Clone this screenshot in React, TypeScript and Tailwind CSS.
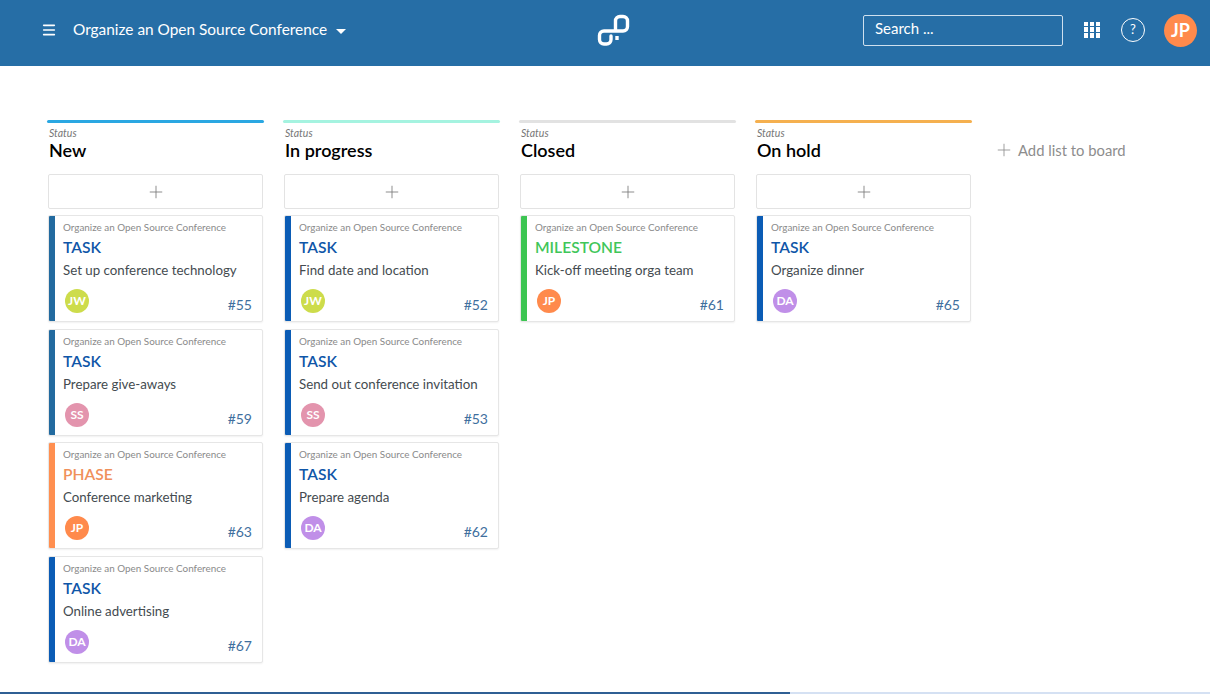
import { Menu, Plus } from 'lucide-react';

const font = "font-['Lato','Open_Sans','Liberation_Sans',sans-serif]";

type Card = {
  type: string;
  typeColor: string;
  barColor: string;
  title: string;
  initials: string;
  avatar: string;
  id: number;
};

const blueDark = 'bg-[#226a9f]';
const blue = 'bg-[#0b5cb5]';
const taskText = 'text-[#0f56a8]';

const JW = { initials: 'JW', avatar: 'bg-[#cddc4b]' };
const SS = { initials: 'SS', avatar: 'bg-[#e394ad]' };
const JP = { initials: 'JP', avatar: 'bg-[#ff8a4c]' };
const DA = { initials: 'DA', avatar: 'bg-[#c08fe8]' };

const columns: { name: string; color: string; cards: Card[] }[] = [
  {
    name: 'New',
    color: 'bg-[#2aa7e2]',
    cards: [
      { type: 'TASK', typeColor: taskText, barColor: blueDark, title: 'Set up conference technology', ...JW, id: 55 },
      { type: 'TASK', typeColor: taskText, barColor: blueDark, title: 'Prepare give-aways', ...SS, id: 59 },
      { type: 'PHASE', typeColor: 'text-[#f0905a]', barColor: 'bg-[#ff8f50]', title: 'Conference marketing', ...JP, id: 63 },
      { type: 'TASK', typeColor: taskText, barColor: blue, title: 'Online advertising', ...DA, id: 67 },
    ],
  },
  {
    name: 'In progress',
    color: 'bg-[#a5f3e0]',
    cards: [
      { type: 'TASK', typeColor: taskText, barColor: blue, title: 'Find date and location', ...JW, id: 52 },
      { type: 'TASK', typeColor: taskText, barColor: blue, title: 'Send out conference invitation', ...SS, id: 53 },
      { type: 'TASK', typeColor: taskText, barColor: blue, title: 'Prepare agenda', ...DA, id: 62 },
    ],
  },
  {
    name: 'Closed',
    color: 'bg-[#e2e2e2]',
    cards: [
      { type: 'MILESTONE', typeColor: 'text-[#40c659]', barColor: 'bg-[#3dc552]', title: 'Kick-off meeting orga team', ...JP, id: 61 },
    ],
  },
  {
    name: 'On hold',
    color: 'bg-[#f5b04f]',
    cards: [
      { type: 'TASK', typeColor: taskText, barColor: blue, title: 'Organize dinner', ...DA, id: 65 },
    ],
  },
];

function Logo() {
  return (
    <svg width="34" height="32" viewBox="0 0 34 32" fill="none" stroke="white" strokeWidth="3.4" strokeLinecap="round">
      <path d="M19.5 16V7a4.5 4.5 0 0 1 4.5-4.5h3a4.5 4.5 0 0 1 4.5 4.5v5.5a4.5 4.5 0 0 1-4.5 4.5H8a4.5 4.5 0 0 0-4.5 4.5v4a4.5 4.5 0 0 0 4.5 4.5h2.5a4.5 4.5 0 0 0 4.5-4.5V22" />
      <path d="M21 22V26" strokeLinecap="butt" />
    </svg>
  );
}

function GridIcon() {
  const cells = [0, 1, 2, 3, 4, 5, 6, 7, 8];
  return (
    <div className="grid grid-cols-3 gap-[1.5px] w-[16px] h-[16px]">
      {cells.map((c) => (
        <span key={c} className="bg-white" />
      ))}
    </div>
  );
}

function TaskCard({ card }: { card: Card }) {
  return (
    <div className="flex h-[107px] ml-[1px] w-[215px] rounded-[2px] bg-white border border-[#e6e6e6] shadow-[0_1px_2px_rgba(0,0,0,0.06)] overflow-hidden">
      <div className={`w-[6px] shrink-0 ${card.barColor}`} />
      <div className="flex-1 flex flex-col pl-[8px] pr-[3px] min-w-0">
        <div className="text-[9.9px] leading-[14px] mt-[4px] text-[#8a8a8a] whitespace-nowrap">Organize an Open Source Conference</div>
        <div className={`text-[15.6px] leading-[20px] mt-[3px] font-semibold ${card.typeColor}`}>{card.type}</div>
        <div className="text-[13.3px] leading-[18px] mt-[4px] text-[#444b50] whitespace-nowrap">{card.title}</div>
        <div className="flex justify-between mt-[10px] pl-[2px]">
          <div className={`w-6 h-6 rounded-full flex items-center justify-center text-white text-[12px] font-bold ${card.avatar}`}>
            {card.initials}
          </div>
          <div className="text-[14px] leading-[18px] mt-[7px] pr-[7px] text-[#3f6f9e]">#{card.id}</div>
        </div>
      </div>
    </div>
  );
}

export default function App() {
  return (
    <div className={`h-[694px] w-[1210px] flex flex-col bg-white overflow-hidden ${font}`}>
      {/* Header */}
      <header className="h-[66px] shrink-0 bg-[#266ea6] flex items-center relative pl-[41px] pr-[13px] pb-[6px] text-white">
        <Menu size={16} strokeWidth={2.4} />
        <span className="ml-[16px] text-[15.4px]">Organize an Open Source Conference</span>
        <span className="ml-[9px] mt-[2px] w-0 h-0 border-x-[5px] border-x-transparent border-t-[5px] border-t-white" />
        <div className="absolute left-[596px] top-[14px]">
          <Logo />
        </div>
        <div className="ml-auto w-[200px] h-[31px] border-[1.5px] border-[#cfe0ee] rounded-[2px] flex items-center pl-[11px] pb-[3px] text-[15px]">
          Search ...
        </div>
        <div className="ml-[21px] mt-[-1px]">
          <GridIcon />
        </div>
        <div className="ml-[21px] w-6 h-6 rounded-full border border-white flex items-center justify-center text-[13px]">?</div>
        <div className="ml-[19px] w-[33px] h-[33px] rounded-full bg-[#ff8a4c] flex items-center justify-center text-[18px] font-bold">JP</div>
      </header>

      {/* Board */}
      <main className="flex-1 flex gap-[18px] pl-[47px] pt-[54px]">
        {columns.map((col) => (
          <section key={col.name} className="w-[218px]">
            <div className={`h-[3px] mr-[1px] rounded-full ${col.color}`} />
            <div className="text-[10.5px] leading-[13px] mt-[4px] ml-[2px] italic text-[#777]">Status</div>
            <h2 className="text-[18px] leading-[22px] mt-[-1px] ml-[2px] font-semibold text-black">{col.name}</h2>
            <button className="flex items-center justify-center w-[215px] h-[35px] ml-[1px] mt-[13px] mb-[6px] bg-white border border-[#e3e3e3] rounded-[2px] text-[#777]">
              <Plus size={20} strokeWidth={1} />
            </button>
            <div className="flex flex-col gap-[6.5px]">
              {col.cards.map((card) => (
                <TaskCard key={card.id} card={card} />
              ))}
            </div>
          </section>
        ))}
        <div className="flex items-start pt-[19px] ml-[3px] text-[#8d8d8d] text-[14.8px]">
          <Plus size={20} strokeWidth={1} className="mt-[1px] mr-[4px]" />
          Add list to board
        </div>
      </main>

      {/* Bottom edge */}
      <div className="h-[2px] shrink-0 flex">
        <div className="w-[790px] bg-[#2f5f94]" />
        <div className="flex-1 bg-[#d5e1f3]" />
      </div>
    </div>
  );
}
